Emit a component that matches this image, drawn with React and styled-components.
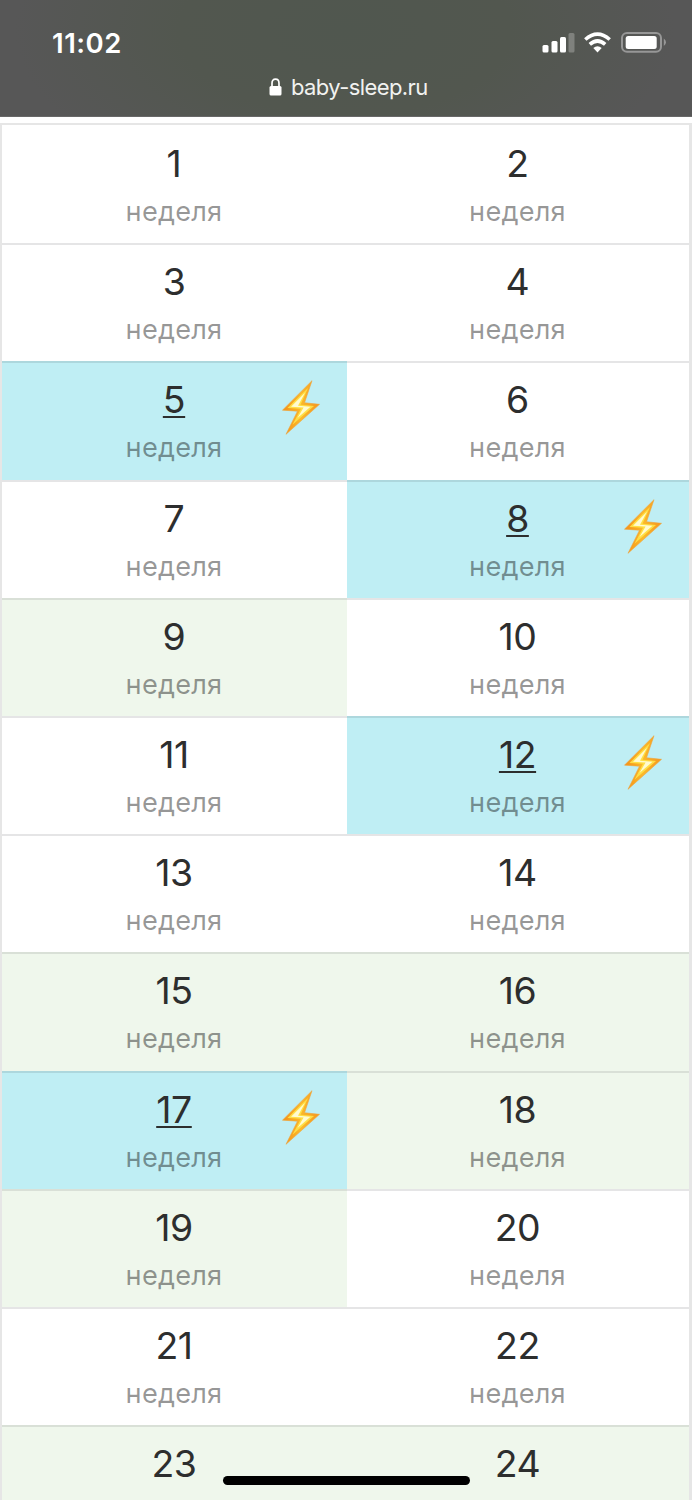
import React from "react";
import styled, { createGlobalStyle } from "styled-components";

const GlobalStyle = createGlobalStyle`
  *, *::before, *::after { box-sizing: border-box; }
  body { margin: 0; background: #fff; font-family: Inter, "Liberation Sans", sans-serif; }
`;

const Screen = styled.div`
  position: relative;
  width: 693px;
  height: 1500px;
  overflow: hidden;
  background: #fff;
`;

const BrowserBar = styled.header`
  width: 692px;
  height: 117px;
  color: #fff;
  background: radial-gradient(ellipse 330px 170px at 345px 30px, #50574f 0%, #52574f 50%, #575757 100%);
  border-bottom: 1px solid #686868;
`;

const StatusRow = styled.div`
  display: flex;
  justify-content: space-between;
  align-items: center;
  height: 73px;
  padding: 12px 26px 0 52px;
`;

const Time = styled.span`
  font-size: 27.5px;
  line-height: 32px;
  font-weight: 600;
  letter-spacing: 0.5px;
`;

const StatusIcons = styled.svg`
  display: block;
  width: 124px;
  height: 24px;
  margin-top: 1px;
`;

const Address = styled.div`
  display: flex;
  align-items: center;
  height: 28px;
  padding-left: 269px;
  gap: 9px;
  font-size: 22px;
  line-height: 28px;
  color: #f1f2f0;
`;

const Host = styled.span`
  letter-spacing: -0.6px;
`;

const Calendar = styled.main`
  display: grid;
  grid-template-columns: 345px 342px;
  grid-auto-rows: 118.2px;
  width: 692px;
  margin-top: 6px;
  border: solid #e6e6e6;
  border-width: 2px 3px 0 2px;
`;

const tones = {
  plain: { fill: "#fff", line: "#e5e5e6" },
  calm: { fill: "#eff7ec", line: "#d9e0d7" },
  storm: { fill: "#bfeef4", line: "#add7dd" },
};

const Week = styled.div`
  position: relative;
  display: flex;
  flex-direction: column;
  align-items: center;
  padding: ${(p) => (p.$first ? 16 : 14)}px 1px 0 0;
  background: ${(p) => tones[p.$tone].fill};
  border-top: ${(p) => (p.$first ? 0 : 2)}px solid ${(p) => tones[p.$tone].line};
`;

const Number = styled.span`
  height: 48px;
  font-size: 37.4px;
  line-height: 45px;
  letter-spacing: -0.4px;
  color: #2d2e2e;
  text-decoration: ${(p) => (p.$marked ? "underline" : "none")};
  text-decoration-thickness: 2px;
  text-underline-offset: 3px;
  text-decoration-skip-ink: none;
`;

const Label = styled.span`
  font-size: 27.2px;
  line-height: 46px;
  letter-spacing: 0.2px;
  color: rgba(0, 0, 0, 0.41);
`;

const Bolt = styled.svg`
  position: absolute;
  top: 14px;
  right: 25px;
  width: 42px;
  height: 61px;
`;

const HomeBar = styled.div`
  position: absolute;
  left: 223px;
  bottom: 15px;
  width: 247px;
  height: 9px;
  border-radius: 5px;
  background: #000;
`;

const calm = [9, 15, 16, 18, 19, 23, 24];
const storm = [5, 8, 12, 17];
const weeks = Array.from({ length: 24 }, (_, i) => i + 1);
const toneOf = (n) => (storm.includes(n) ? "storm" : calm.includes(n) ? "calm" : "plain");

function Lightning({ id }) {
  return (
    <Bolt viewBox="0 0 42 58" preserveAspectRatio="none">
      <defs>
        <linearGradient id={id} x1="0" y1="0" x2="1" y2="0">
          <stop offset="0" stopColor="#f58f16" />
          <stop offset=".5" stopColor="#fbb92a" />
          <stop offset="1" stopColor="#f5961e" />
        </linearGradient>
      </defs>
      <path d="M32 3.5 2.5 31.5 17.5 32.5 6 54.5 39.5 26 24.5 24.5Z" fill={`url(#${id})`} stroke="#efa43b" strokeWidth=".6" strokeLinejoin="round" />
      <path d="M28 10.5 7.5 29.5 21 30.2 12.5 45.5 34 27.6 20.5 26.5Z" fill="#ffdf45" />
      <path d="M25 15 11 28.3 23.6 29 17.5 39 30.5 28.3 18 27.4Z" fill="#fffbd0" />
    </Bolt>
  );
}

export default function App() {
  return (
    <Screen>
      <GlobalStyle />
      <BrowserBar>
        <StatusRow>
          <Time>11:02</Time>
          <StatusIcons viewBox="0 0 124 24" fill="#fff">
            <rect x="0.5" y="14" width="6" height="7.5" rx="1.5" />
            <rect x="9.5" y="10" width="6" height="11.5" rx="1.5" />
            <rect x="18" y="6" width="6" height="15.5" rx="1.5" />
            <rect x="26.5" y="2" width="6" height="19.5" rx="1.5" opacity=".25" />
            <g fill="none" stroke="#fff" strokeWidth="3.6">
              <path d="M43.3 8.5Q55.5-2.3 67.7 8.5" />
              <path d="M47.8 13.4Q55.5 6.6 63.2 13.4" />
            </g>
            <path d="M51.3 17Q55.5 13.6 59.7 17L55.5 21.4Z" />
            <rect x="80" y="2" width="39" height="18.8" rx="5" fill="none" stroke="#979797" strokeWidth="2" />
            <rect x="83.7" y="5" width="31" height="13" rx="2.5" />
            <path d="M121.8 7.5Q124 9 124 11.3T121.8 15Z" fill="#979797" />
          </StatusIcons>
        </StatusRow>
        <Address>
          <svg width="13" height="18" viewBox="0 0 13 18">
            <path d="M3 9V5.2Q3 1.2 6.5 1.2T10 5.2V9" fill="none" stroke="#fff" strokeWidth="1.7" />
            <rect x=".5" y="8" width="12" height="9.5" rx="1.5" fill="#fff" />
          </svg>
          <Host>baby-sleep.ru</Host>
        </Address>
      </BrowserBar>
      <Calendar>
        {weeks.map((n) => (
          <Week key={n} $tone={toneOf(n)} $first={n < 3}>
            <Number $marked={storm.includes(n)}>{n}</Number>
            {n < 23 && <Label>неделя</Label>}
            {storm.includes(n) && <Lightning id={`bolt-${n}`} />}
          </Week>
        ))}
      </Calendar>
      <HomeBar />
    </Screen>
  );
}
